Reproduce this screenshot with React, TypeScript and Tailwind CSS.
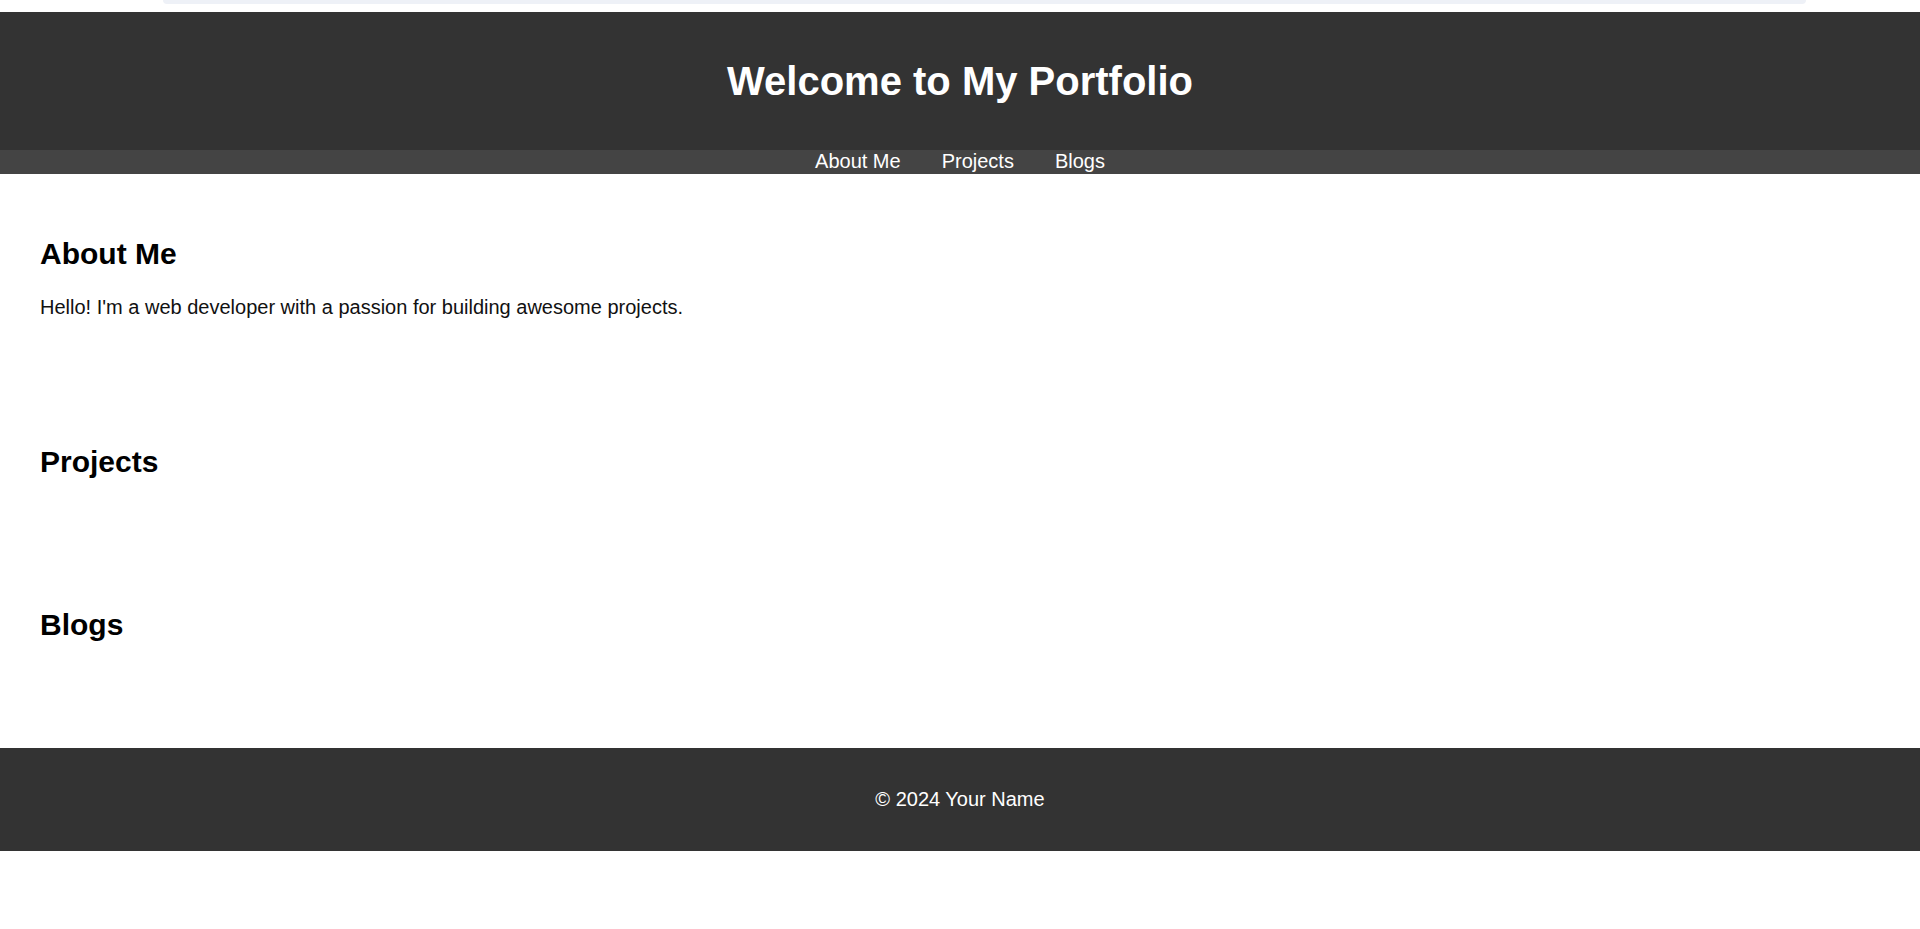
export default function App() {
  const links = ['About Me', 'Projects', 'Blogs'];

  return (
    <div className="min-h-[929px] bg-white font-['Liberation_Sans',Arial,sans-serif]">
      {/* thin strip above the header */}
      <div className="h-[12px] pl-[163px] pr-[114px]">
        <div className="h-[4px] rounded-b-[6px] bg-[#eef1f7]" />
      </div>

      <header className="bg-[#333333] py-[20px] text-center">
        <h1 className="my-[26px] text-[40px] font-bold leading-[46px] text-white">Welcome to My Portfolio</h1>
      </header>

      <nav className="flex h-[24px] justify-center gap-[41px] bg-[#444444]">
        {links.map((l) => (
          <a key={l} href="#" className="text-[20px] leading-[23px] text-white">
            {l}
          </a>
        ))}
      </nav>

      <main>
        <section className="px-[40px] pt-[38px] pb-[41px]">
          <h2 className="mt-[25px] mb-[24px] text-[30px] font-bold leading-[34.5px] text-black">About Me</h2>
          <p className="my-[20px] text-[20px] leading-[23px] text-[#111]">
            Hello! I'm a web developer with a passion for building awesome projects.
          </p>
        </section>

        <section className="p-[40px]">
          <h2 className="mt-[25px] mb-[24px] text-[30px] font-bold leading-[34.5px] text-black">Projects</h2>
        </section>

        <section className="p-[40px]">
          <h2 className="mt-[25px] mb-[24px] text-[30px] font-bold leading-[34.5px] text-black">Blogs</h2>
        </section>
      </main>

      <footer className="mt-[41px] bg-[#333333] py-[20px] text-center">
        <p className="my-[20px] text-[20px] leading-[23px] text-white">© 2024 Your Name</p>
      </footer>
    </div>
  );
}
